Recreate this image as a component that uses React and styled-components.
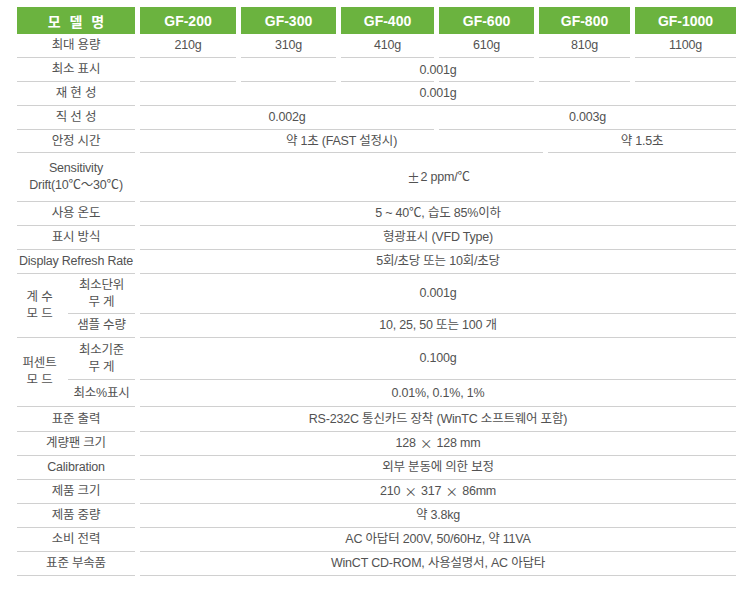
import React from "react";
import styled, { createGlobalStyle } from "styled-components";

const GREEN = "#6bb33f";
const LINE = "#d0d0d0";
const TEXT = "#525252";

const GlobalStyle = createGlobalStyle`
  body {
    margin: 0;
    background: #fff;
    font-family: "Liberation Sans", "Noto Sans CJK KR", sans-serif;
  }
`;

const Page = styled.div`
  padding: 7px 0 0 17px;
`;

const SpecTable = styled.div`
  display: grid;
  grid-template-columns: 118px 96px 95px 93px 95px 91px 101px;
  grid-template-rows:
    27px 24px 24px 24px 24px 23px 49px 24px 24px 24px
    40px 24px 42px 27px 25px 24px 24px 24px 24px 24px 24px;
  column-gap: 5px;
  width: 719px;
  font-size: 12.5px;
  color: ${TEXT};
  letter-spacing: -0.2px;
`;

const HeadCell = styled.div`
  display: flex;
  align-items: center;
  justify-content: center;
  background: ${GREEN};
  color: #fff;
  font-weight: 700;
  font-size: 14px;
  letter-spacing: 0;
  word-spacing: ${(p) => (p.$spaced ? "5px" : "0")};
`;

const Cell = styled.div`
  grid-column: span ${(p) => p.$span || 1};
  display: flex;
  align-items: center;
  justify-content: center;
  text-align: center;
  line-height: 17px;
  white-space: pre-wrap;
  border-bottom: 1px solid ${LINE};
  ${(p) =>
    p.$segmented &&
    `
    border-bottom: none;
    background-image: linear-gradient(to right,
      ${LINE} 0 96px, transparent 96px 101px,
      ${LINE} 101px 196px, transparent 196px 201px,
      ${LINE} 201px 294px, transparent 294px 299px,
      ${LINE} 299px 394px, transparent 394px 399px,
      ${LINE} 399px 490px, transparent 490px 495px,
      ${LINE} 495px);
    background-size: 100% 1px;
    background-position: left bottom;
    background-repeat: no-repeat;
  `}
`;

/* value area with its own split, not on the model columns */
const SplitValue = styled.div`
  grid-column: span 6;
  display: grid;
  grid-template-columns: ${(p) => p.$cols};
  column-gap: 5px;
`;

const Sign = styled.span`
  font-family: "Noto Sans CJK KR", sans-serif;
  margin: 0 1px;
`;

const ModeGroup = styled.div`
  grid-row: span 2;
  display: grid;
  grid-template-columns: 45px 1fr;
  grid-template-rows: ${(p) => p.$rows};
  column-gap: 6px;
  border-bottom: 1px solid ${LINE};
`;

const ModeTitle = styled.div`
  grid-row: span 2;
  display: flex;
  align-items: center;
  justify-content: center;
  text-align: center;
  line-height: 17px;
  white-space: pre-line;
`;

const SubLabel = styled.div`
  display: flex;
  align-items: center;
  justify-content: center;
  text-align: center;
  line-height: 17px;
  white-space: pre-line;
  border-bottom: ${(p) => (p.$last ? "none" : `1px solid ${LINE}`)};
`;

const models = ["GF-200", "GF-300", "GF-400", "GF-600", "GF-800", "GF-1000"];

const rows = [
  { label: "최대 용량", values: ["210g", "310g", "410g", "610g", "810g", "1100g"] },
  { label: "최소 표시", values: [["0.001g", 6, true]] },
  { label: "재 현 성", values: [["0.001g", 6]] },
  { label: "직 선 성", values: [["0.002g", 3], ["0.003g", 3]] },
];

const modes = [
  {
    title: "계 수\n모 드",
    rows: "40px 1fr",
    items: [
      ["최소단위\n무 게", "0.001g"],
      ["샘플 수량", "10, 25, 50 또는 100 개"],
    ],
  },
  {
    title: "퍼센트\n모 드",
    rows: "42px 1fr",
    items: [
      ["최소기준\n무 게", "0.100g"],
      ["최소%표시", "0.01%, 0.1%, 1%"],
    ],
  },
];

const App = () => {
  return (
    <Page>
      <GlobalStyle />
      <SpecTable>
        <HeadCell $spaced>모 델 명</HeadCell>
        {models.map((m) => (
          <HeadCell key={m}>{m}</HeadCell>
        ))}

        {rows.map((row) => (
          <React.Fragment key={row.label}>
            <Cell>{row.label}</Cell>
            {row.values.map((v, i) =>
              Array.isArray(v) ? (
                <Cell key={i} $span={v[1]} $segmented={v[2]}>
                  {v[0]}
                </Cell>
              ) : (
                <Cell key={i}>{v}</Cell>
              )
            )}
          </React.Fragment>
        ))}

        <Cell>안정 시간</Cell>
        <SplitValue $cols="403px 188px">
          <Cell>약 1초 (FAST 설정시)</Cell>
          <Cell>약 1.5초</Cell>
        </SplitValue>

        <Cell>{"Sensitivity\nDrift(10℃～30℃)"}</Cell>
        <Cell $span={6}>
          <Sign>±</Sign>2 ppm/℃
        </Cell>

        <Cell>사용 온도</Cell>
        <Cell $span={6}>{"5 ~ 40℃, 습도 85%이하"}</Cell>

        <Cell>표시 방식</Cell>
        <Cell $span={6}>형광표시 (VFD Type)</Cell>

        <Cell>Display Refresh Rate</Cell>
        <Cell $span={6}>5회/초당 또는 10회/초당</Cell>

        {modes.map((mode) => (
          <React.Fragment key={mode.title}>
            <ModeGroup $rows={mode.rows}>
              <ModeTitle>{mode.title}</ModeTitle>
              {mode.items.map(([sub], i) => (
                <SubLabel key={sub} $last={i === mode.items.length - 1}>
                  {sub}
                </SubLabel>
              ))}
            </ModeGroup>
            {mode.items.map(([sub, value]) => (
              <Cell key={sub} $span={6}>
                {value}
              </Cell>
            ))}
          </React.Fragment>
        ))}

        <Cell>표준 출력</Cell>
        <Cell $span={6}>RS-232C 통신카드 장착 (WinTC 소프트웨어 포함)</Cell>

        <Cell>계량팬 크기</Cell>
        <Cell $span={6}>
          128 <Sign>×</Sign> 128 mm
        </Cell>

        <Cell>Calibration</Cell>
        <Cell $span={6}>외부 분동에 의한 보정</Cell>

        <Cell>제품 크기</Cell>
        <Cell $span={6}>
          210 <Sign>×</Sign> 317 <Sign>×</Sign> 86mm
        </Cell>

        <Cell>제품 중량</Cell>
        <Cell $span={6}>약 3.8kg</Cell>

        <Cell>소비 전력</Cell>
        <Cell $span={6}>AC 아답터 200V, 50/60Hz, 약 11VA</Cell>

        <Cell>표준 부속품</Cell>
        <Cell $span={6}>WinCT CD-ROM, 사용설명서, AC 아답타</Cell>
      </SpecTable>
    </Page>
  );
};

export default App;
